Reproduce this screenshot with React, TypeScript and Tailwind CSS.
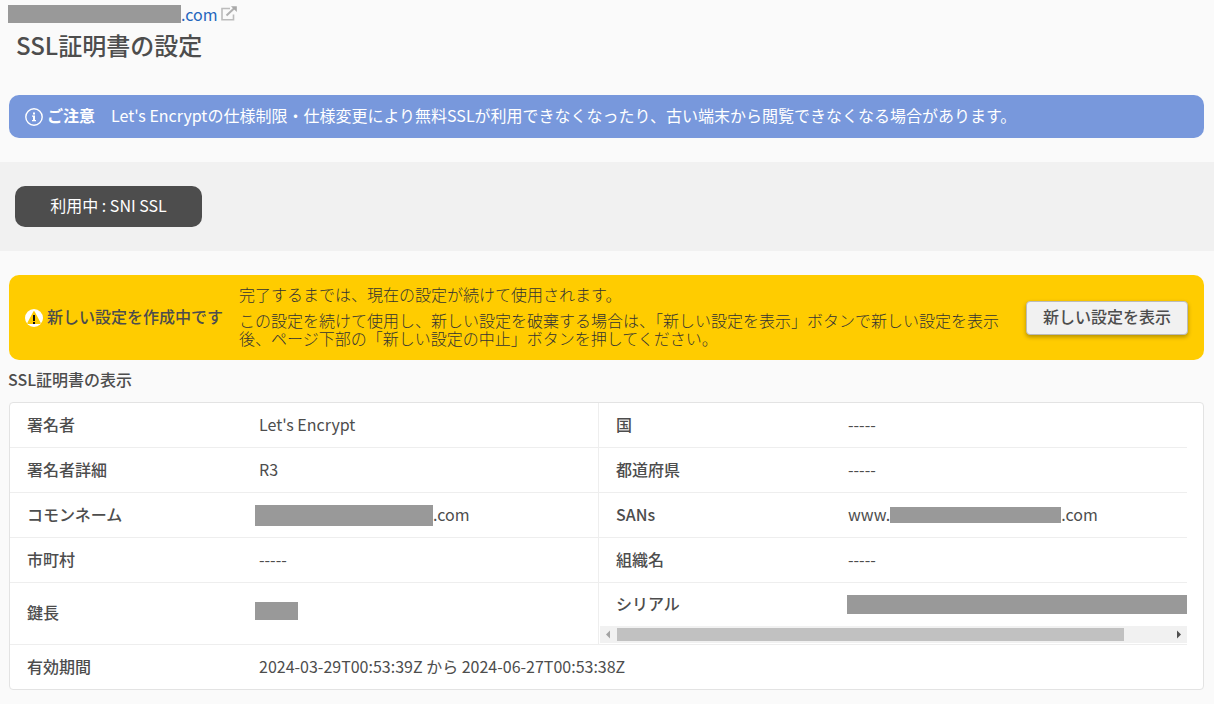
import type { ReactNode } from "react";

const rows: { left: [string, ReactNode]; right: [string, ReactNode] }[] = [
  { left: ["署名者", "Let's Encrypt"], right: ["国", "-----"] },
  { left: ["署名者詳細", "R3"], right: ["都道府県", "-----"] },
  {
    left: [
      "コモンネーム",
      <span className="-ml-1 flex items-center">
        <span className="mt-[3px] h-[21px] w-[178px] bg-[#999]" />
        .com
      </span>,
    ],
    right: [
      "SANs",
      <span className="flex items-center">
        www.
        <span className="mt-[3px] h-4 w-[171px] bg-[#999]" />
        .com
      </span>,
    ],
  },
  { left: ["市町村", "-----"], right: ["組織名", "-----"] },
];

function ExternalIcon() {
  return (
    <svg className="h-4 w-4" viewBox="0 0 16 16" fill="none" aria-hidden="true">
      <path d="M9 2.5H1V13.8H12.5V8.5" stroke="#bcbcbc" strokeWidth="1.6" />
      <path d="M5.5 9.5L13.5 2" stroke="#b0b0b0" strokeWidth="2" />
      <path d="M10 0.3H15.8V6Z" fill="#a8a8a8" />
    </svg>
  );
}

function InfoIcon() {
  return (
    <svg className="h-[18px] w-[18px] shrink-0" viewBox="0 0 18 18" aria-hidden="true">
      <circle cx="9" cy="9" r="8.2" fill="none" stroke="#fff" strokeWidth="1.4" />
      <path d="M8 4.5h2v2H8zM7 7.5h3V12h1v1.2H7V12h1V8.7H7z" fill="#fff" />
    </svg>
  );
}

function WarningIcon() {
  return (
    <svg className="h-[18px] w-[18px] shrink-0" viewBox="0 0 18 18" aria-hidden="true">
      <circle cx="9" cy="9" r="9" fill="#fff" />
      <path d="M9 2.8L15 14.2H3Z" fill="#fc0" stroke="#fc0" strokeWidth="1.4" strokeLinejoin="round" />
      <path d="M8 6h2v6H8zM8 13h2v2H8z" fill="#111" />
    </svg>
  );
}

const th = "border-b border-[#eee] pb-[3px] pl-[17px] text-left font-medium";
const td = "border-b border-[#eee] pb-[3px] pl-[17px]";

export default function App() {
  return (
    <main className="min-h-screen bg-[#fafafa] font-['Noto_Sans_CJK_JP',sans-serif] text-base leading-6 text-[#4d4d4d]">
      <header className="px-2 pt-1">
        <a href="#site" className="flex h-5 items-center text-[#2566bd]">
          <span className="h-[18px] w-[173px] bg-[#999]" />
          <span className="mr-[3px]">.com</span>
          <ExternalIcon />
        </a>
        <h1 className="mt-[3px] px-2 text-2xl leading-9 font-medium">SSL証明書の設定</h1>
      </header>

      <section className="mt-8 mr-[10px] ml-[9px] flex h-[43px] items-center rounded-[10px] bg-[#7898dc] px-4 text-white">
        <InfoIcon />
        <strong className="mr-4 ml-1 pb-[3px] font-bold">ご注意</strong>
        <p className="pb-[3px]">Let's Encryptの仕様制限・仕様変更により無料SSLが利用できなくなったり、古い端末から閲覧できなくなる場合があります。</p>
      </section>

      <section className="mt-6 bg-[#f1f1f1] px-[15px] py-6">
        <button type="button" className="h-[41px] w-[187px] rounded-[10px] bg-[#4d4d4d] pb-[3px] text-white">
          利用中 : SNI SSL
        </button>
      </section>

      <section className="mt-6 mr-[10px] ml-[9px] flex h-[85px] items-center rounded-[10px] bg-[#fc0] px-4">
        <WarningIcon />
        <strong className="ml-1 shrink-0 pb-[3px] font-medium">新しい設定を作成中です</strong>
        <div className="ml-4 flex-1 space-y-2 pb-[3px] leading-[18px] font-light text-[#333]">
          <p>完了するまでは、現在の設定が続けて使用されます。</p>
          <p>この設定を続けて使用し、新しい設定を破棄する場合は、「新しい設定を表示」ボタンで新しい設定を表示後、ページ下部の「新しい設定の中止」ボタンを押してください。</p>
        </div>
        <button
          type="button"
          className="ml-6 h-[34px] w-[162px] shrink-0 rounded border border-[#bbb] bg-[#f1f1f1] pb-[3px] font-medium shadow-[0_2px_4px_rgba(0,0,0,0.3)]"
        >
          新しい設定を表示
        </button>
      </section>

      <h2 className="mt-[7px] ml-2 font-medium">SSL証明書の表示</h2>

      <div className="mt-[11px] mr-[10px] ml-[9px] rounded border border-[#e3e3e3] bg-white pr-4">
        <table className="w-full table-fixed border-separate border-spacing-0">
          <colgroup>
            <col className="w-[232px]" />
            <col />
            <col className="w-[233px]" />
            <col />
          </colgroup>
          <tbody>
            {rows.map(({ left, right }) => (
              <tr key={left[0]} className="h-[45px]">
                <th scope="row" className={th}>{left[0]}</th>
                <td className={td}>{left[1]}</td>
                <th scope="row" className="border-b border-l border-[#eee] pb-[3px] pl-[17px] text-left font-medium">{right[0]}</th>
                <td className={td}>{right[1]}</td>
              </tr>
            ))}
            <tr className="h-[62px]">
              <th scope="row" className={th}>鍵長</th>
              <td className={td}>
                <span className="-ml-1 mb-[3px] block h-[18px] w-[43px] bg-[#999]" />
              </td>
              <td colSpan={2} className="border-b border-l border-[#eee] p-0 align-top">
                <div className="flex h-[43px] items-center">
                  <span className="w-[231px] shrink-0 pb-[3px] pl-[17px] font-medium">シリアル</span>
                  <span className="ml-[17px] h-[19px] flex-1 bg-[#999]" />
                </div>
                <div className="ml-px flex h-[17px] items-center bg-[#f1f1f1]">
                  <svg className="h-[17px] w-[17px] shrink-0" viewBox="0 0 17 17" aria-hidden="true">
                    <path d="M10 4.5v8l-4-4z" fill="#a3a3a3" />
                  </svg>
                  <div className="flex-1">
                    <div className="h-[13px] w-11/12 bg-[#c1c1c1]" />
                  </div>
                  <svg className="h-[17px] w-[17px] shrink-0" viewBox="0 0 17 17" aria-hidden="true">
                    <path d="M7 4.5v8l4-4z" fill="#505050" />
                  </svg>
                </div>
              </td>
            </tr>
            <tr className="h-[44px]">
              <th scope="row" className="pb-[3px] pl-[17px] text-left font-medium">有効期間</th>
              <td colSpan={3} className="pb-[3px] pl-[17px]">2024-03-29T00:53:39Z から 2024-06-27T00:53:38Z</td>
            </tr>
          </tbody>
        </table>
      </div>
    </main>
  );
}
